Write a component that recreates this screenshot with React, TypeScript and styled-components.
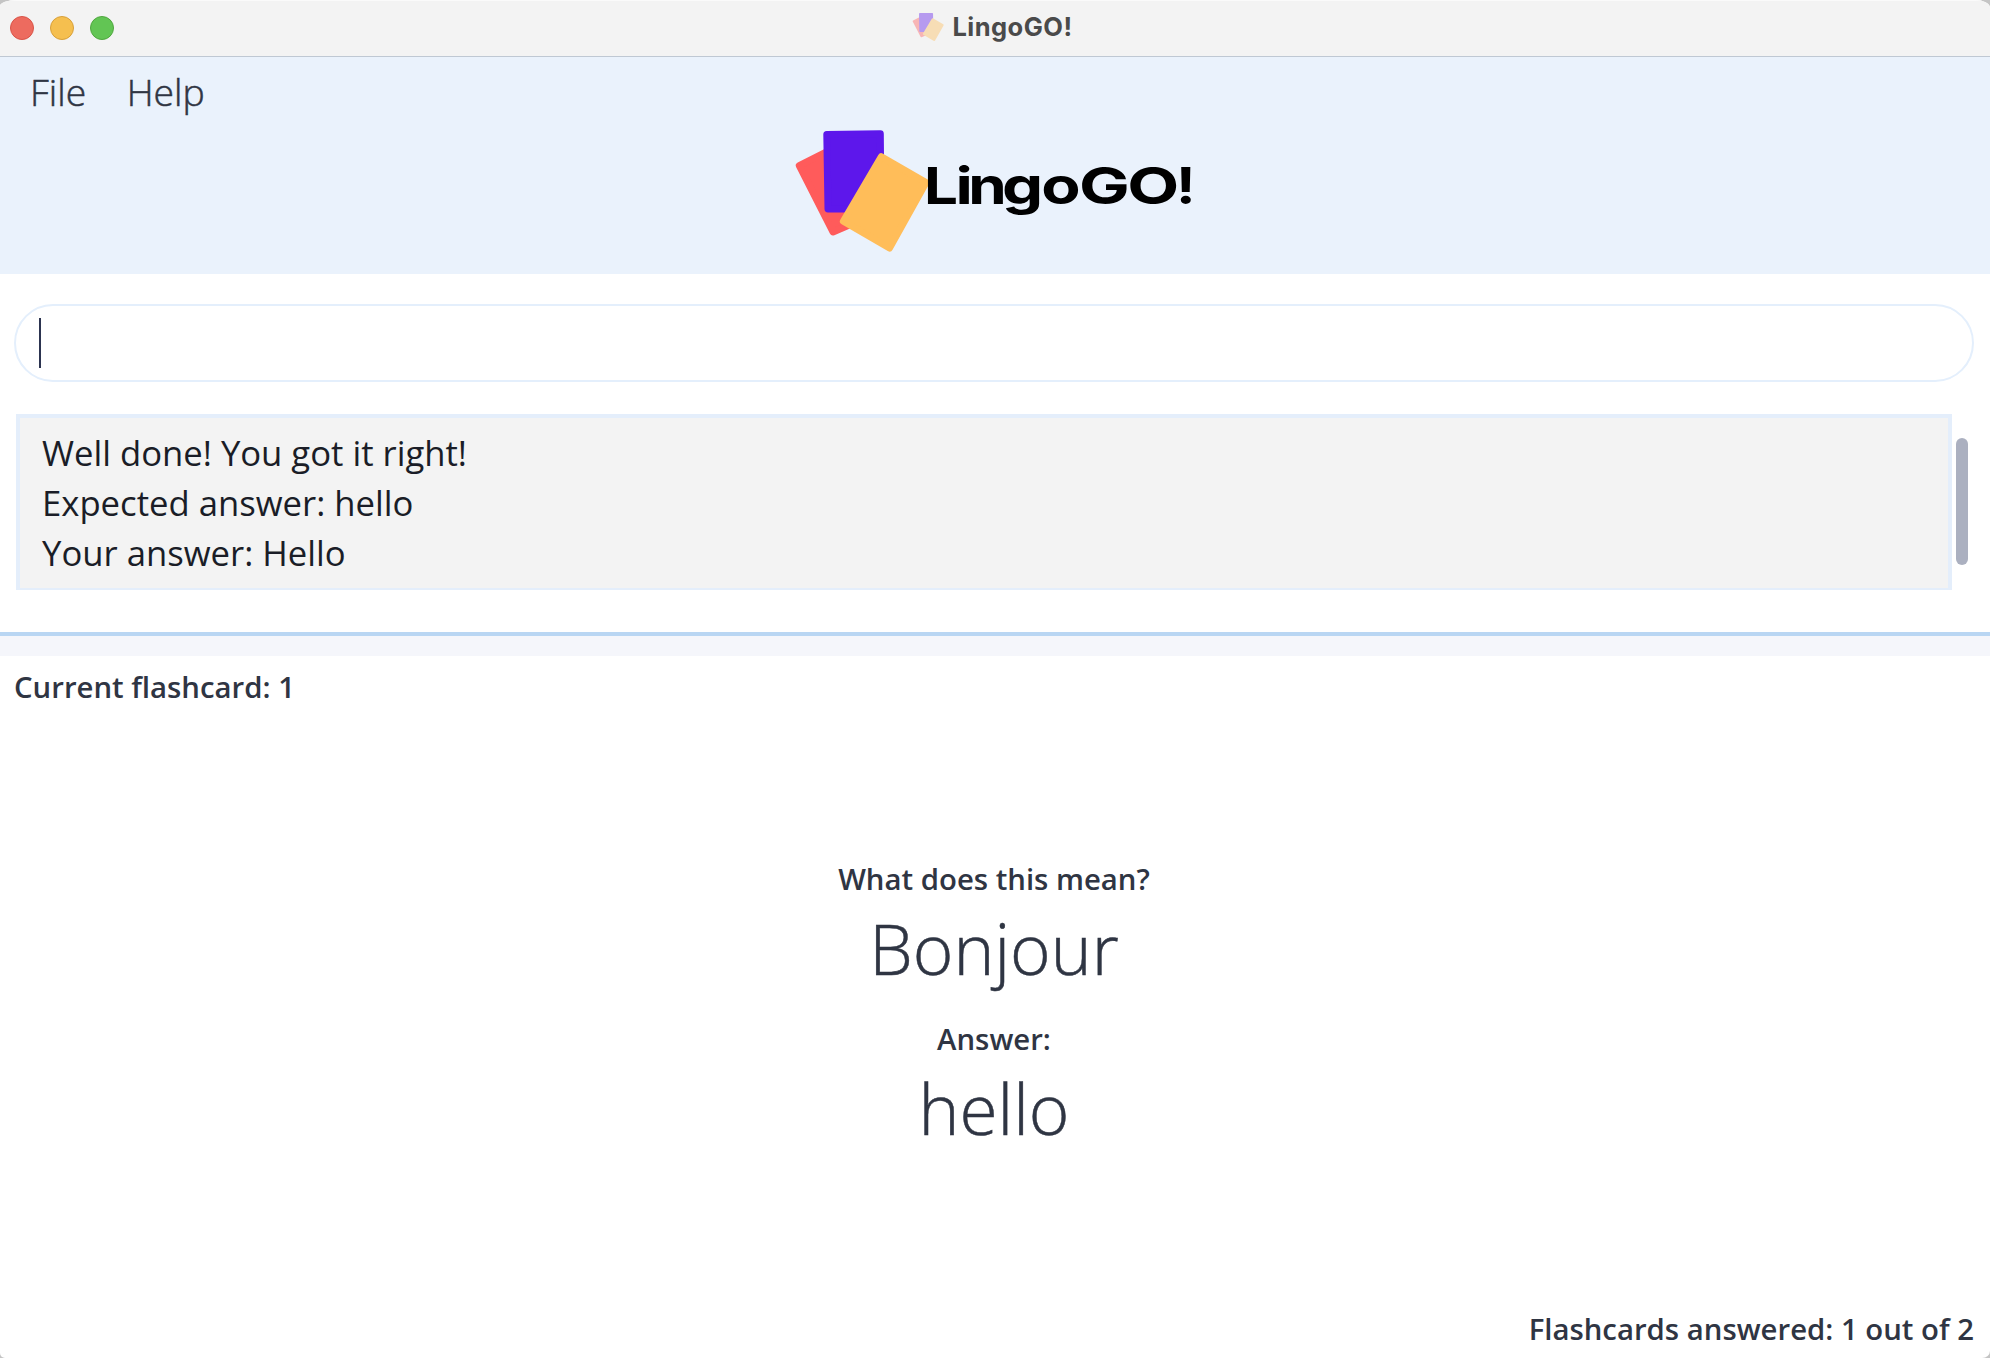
import React from 'react';
import styled, { createGlobalStyle } from 'styled-components';

const Global = createGlobalStyle`
  * { box-sizing: border-box; }
  html, body { margin: 0; padding: 0; background: #c4c4c4; }
`;

const Window = styled.div`
  width: 1990px;
  height: 1358px;
  display: flex;
  flex-direction: column;
  overflow: hidden;
  border-radius: 17px 15px 8px 5px / 6px 8px 7px 5px;
  background: #ffffff;
  font-family: "Open Sans", sans-serif;
  color: #2f3543;
`;

const TitleBar = styled.div`
  position: relative;
  height: 57px;
  flex: none;
  display: flex;
  align-items: center;
  gap: 16px;
  padding: 0 0 1px 10px;
  background: #f3f3f3;
  border-bottom: 1px solid #bfc8d3;
  box-shadow: inset 0 1px 0 #fafafa;
`;

const Light = styled.span<{ $fill: string; $edge: string }>`
  width: 24px;
  height: 24px;
  border-radius: 50%;
  background: ${(p) => p.$fill};
  border: 1px solid ${(p) => p.$edge};
`;

const Title = styled.div`
  position: absolute;
  left: 912px;
  top: 11px;
  display: flex;
  align-items: center;
  gap: 8.5px;
  font: 700 25.5px/32px Inter, sans-serif;
  letter-spacing: 0.45px;
  color: #4a4a4a;
  white-space: nowrap;
`;

const Header = styled.header`
  height: 217px;
  flex: none;
  background: #eaf2fc;
  display: flex;
  flex-direction: column;
`;

const MenuBar = styled.nav`
  display: flex;
  gap: 40.5px;
  padding: 10px 30px 0;
  height: 70px;
`;

const MenuItem = styled.span`
  font-size: 37.33px;
  font-weight: 300;
  line-height: 50px;
  -webkit-text-stroke: 0.5px currentColor;
`;

const Brand = styled.div`
  display: flex;
  padding-left: 790px;
`;

const CommandRow = styled.div`
  flex: none;
  padding: 30px 16px 32px 14px;
`;

const CommandBox = styled.div`
  height: 78px;
  border: 2px solid #e4effc;
  border-radius: 39px;
  padding: 12px 23px;
  display: flex;
`;

const Caret = styled.span`
  width: 2px;
  height: 50px;
  background: #2c3450;
`;

const ResultRow = styled.div`
  flex: none;
  height: 218px;
  padding: 0 22px 0 16px;
  display: flex;
  gap: 4px;
`;

const ResultBox = styled.div`
  flex: 1;
  height: 176px;
  border: 4px solid #e4eefb;
  border-bottom-width: 2px;
  background: #f3f3f3;
  padding: 10px 22px;
  color: #1a1d27;
  font-size: 34.67px;
  line-height: 50px;
`;

const Thumb = styled.div`
  width: 12px;
  height: 127px;
  margin-top: 24px;
  border-radius: 6px;
  background: #abb0c0;
`;

const Divider = styled.div`
  flex: none;
  height: 24px;
  border-top: 4px solid #b9d6f3;
  background: #f5f6fb;
`;

const Card = styled.main`
  flex: 1;
  display: flex;
  flex-direction: column;
  padding: 10px 16px 8px 14px;
`;

const Label = styled.div`
  font-size: 29.33px;
  font-weight: 600;
  line-height: 42px;
  white-space: nowrap;
`;

const Phrases = styled.section`
  flex: 1;
  padding: 150px 0 0 0;
  display: flex;
  flex-direction: column;
  align-items: center;
`;

const Phrase = styled.div`
  font-size: 69.33px;
  font-weight: 300;
  line-height: 96px;
  margin-bottom: 22px;
  -webkit-text-stroke: 0.5px currentColor;
`;

const Footer = styled.footer`
  display: flex;
  justify-content: flex-end;
`;

const Cards = () => (
  <g strokeWidth="7" strokeLinejoin="round">
    <path d="M9.3 45.7 L43 28.5 L80 96 L43 112 Z" fill="#ff5b5b" stroke="#ff5b5b" />
    <path d="M36.8 14.5 L90.3 13.8 L91 89 L38 89 Z" fill="#5d17eb" stroke="#5d17eb" />
    <path d="M91.3 36.7 L136 62.5 L99.5 128 L53.4 101.3 Z" fill="#ffbd59" stroke="#ffbd59" />
  </g>
);

const letters = [
  { char: 'L', x: 134, width: 34 },
  { char: 'i', x: 165.5, width: 17.3 },
  { char: 'n', x: 178.3, width: 38.5 },
  { char: 'g', x: 212, width: 41.2 },
  { char: 'o', x: 251.2, width: 39.4 },
  { char: 'G', x: 289, width: 50.8 },
  { char: 'O', x: 337.3, width: 52 },
  { char: '!', x: 386, width: 19.6 },
];

export default function App() {
  return (
    <>
      <Global />
      <Window>
        <TitleBar>
          <Light $fill="#ed6b5f" $edge="#d95448" />
          <Light $fill="#f5bf4f" $edge="#d8a03a" />
          <Light $fill="#62c554" $edge="#50a73f" />
          <Title>
            <svg width="32" height="32" viewBox="3 6 138 130" opacity="0.4">
              <Cards />
            </svg>
            <span>LingoGO!</span>
          </Title>
        </TitleBar>
        <Header>
          <MenuBar>
            <MenuItem>File</MenuItem>
            <MenuItem>Help</MenuItem>
          </MenuBar>
          <Brand>
            <svg width="420" height="140" viewBox="0 7 420 140">
              <Cards />
              <text y="84" fontFamily="Inter, sans-serif" fontWeight="700" fontSize="50.4">
                {letters.map((l, i) => (
                  <tspan key={i} x={l.x} textLength={l.width} lengthAdjust="spacingAndGlyphs">{l.char}</tspan>
                ))}
              </text>
            </svg>
          </Brand>
        </Header>
        <CommandRow>
          <CommandBox>
            <Caret />
          </CommandBox>
        </CommandRow>
        <ResultRow>
          <ResultBox>
            <div>Well done! You got it right!</div>
            <div>Expected answer: hello</div>
            <div>Your answer: Hello</div>
          </ResultBox>
          <Thumb />
        </ResultRow>
        <Divider />
        <Card>
          <Label>Current flashcard: 1</Label>
          <Phrases>
            <Label>What does this mean?</Label>
            <Phrase>Bonjour</Phrase>
            <Label>Answer:</Label>
            <Phrase>hello</Phrase>
          </Phrases>
          <Footer>
            <Label>Flashcards answered: 1 out of 2</Label>
          </Footer>
        </Card>
      </Window>
    </>
  );
}
